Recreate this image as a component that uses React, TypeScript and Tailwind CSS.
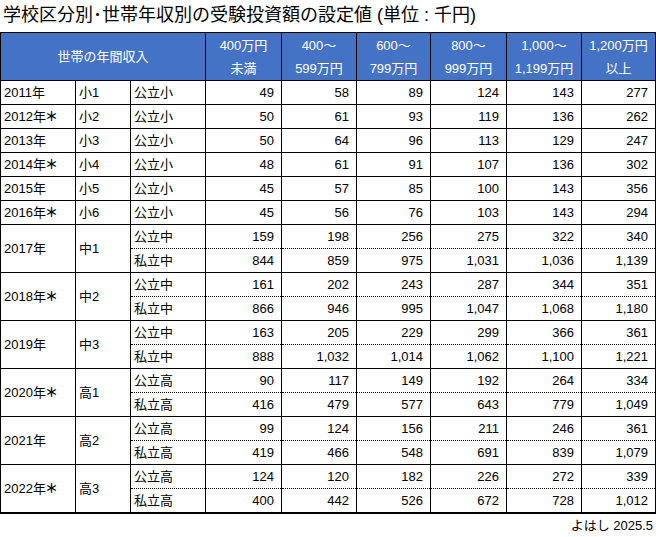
const heads = [
  ["400万円", "未満"],
  ["400～", "599万円"],
  ["600～", "799万円"],
  ["800～", "999万円"],
  ["1,000～", "1,199万円"],
  ["1,200万円", "以上"],
];

type Group = { year: string; star?: boolean; grade: string; rows: [string, string[]][] };

const groups: Group[] = [
  { year: "2011年", grade: "小1", rows: [["公立小", ["49", "58", "89", "124", "143", "277"]]] },
  { year: "2012年", star: true, grade: "小2", rows: [["公立小", ["50", "61", "93", "119", "136", "262"]]] },
  { year: "2013年", grade: "小3", rows: [["公立小", ["50", "64", "96", "113", "129", "247"]]] },
  { year: "2014年", star: true, grade: "小4", rows: [["公立小", ["48", "61", "91", "107", "136", "302"]]] },
  { year: "2015年", grade: "小5", rows: [["公立小", ["45", "57", "85", "100", "143", "356"]]] },
  { year: "2016年", star: true, grade: "小6", rows: [["公立小", ["45", "56", "76", "103", "143", "294"]]] },
  {
    year: "2017年",
    grade: "中1",
    rows: [
      ["公立中", ["159", "198", "256", "275", "322", "340"]],
      ["私立中", ["844", "859", "975", "1,031", "1,036", "1,139"]],
    ],
  },
  {
    year: "2018年",
    star: true,
    grade: "中2",
    rows: [
      ["公立中", ["161", "202", "243", "287", "344", "351"]],
      ["私立中", ["866", "946", "995", "1,047", "1,068", "1,180"]],
    ],
  },
  {
    year: "2019年",
    grade: "中3",
    rows: [
      ["公立中", ["163", "205", "229", "299", "366", "361"]],
      ["私立中", ["888", "1,032", "1,014", "1,062", "1,100", "1,221"]],
    ],
  },
  {
    year: "2020年",
    star: true,
    grade: "高1",
    rows: [
      ["公立高", ["90", "117", "149", "192", "264", "334"]],
      ["私立高", ["416", "479", "577", "643", "779", "1,049"]],
    ],
  },
  {
    year: "2021年",
    grade: "高2",
    rows: [
      ["公立高", ["99", "124", "156", "211", "246", "361"]],
      ["私立高", ["419", "466", "548", "691", "839", "1,079"]],
    ],
  },
  {
    year: "2022年",
    star: true,
    grade: "高3",
    rows: [
      ["公立高", ["124", "120", "182", "226", "272", "339"]],
      ["私立高", ["400", "442", "526", "672", "728", "1,012"]],
    ],
  },
];

const widths = ["w-[75px]", "w-[55px]", "w-[75px]", "w-[76px]", "w-[75px]", "w-[74px]", "w-[76px]", "w-[75px]", "w-[74px]"];

export default function App() {
  return (
    <div className="w-[656px] h-[537px] bg-white text-black font-['Liberation_Sans','Noto_Sans_CJK_JP',sans-serif]">
      <h1 className="h-[32px] pl-[3px] pt-[3px] text-[18px] leading-[24px] font-normal">
        学校区分別･世帯年収別の受験投資額の設定値 (単位 : 千円)
      </h1>
      <table className="table-fixed border-collapse w-[655px] text-[13px]">
        <colgroup>
          {widths.map((w, i) => (
            <col key={i} className={w} />
          ))}
        </colgroup>
        <thead>
          <tr className="h-[48px] bg-[#4472c4] text-white">
            <th colSpan={3} className="border border-black font-normal">
              世帯の年間収入
            </th>
            {heads.map(([a, b]) => (
              <th key={a + b} className="border border-black font-normal leading-[23px]">
                <div>{a}</div>
                <div>{b}</div>
              </th>
            ))}
          </tr>
        </thead>
        <tbody className="border-b-2 border-black">
          {groups.map((g) =>
            g.rows.map(([kind, nums], ri) => {
              // the split between 公立 and 私立 rows is dotted on both sides of the collapsed border
              const split =
                g.rows.length === 2
                  ? ri === 0
                    ? "[border-bottom-style:dotted]"
                    : "[border-top-style:dotted]"
                  : "";
              return (
                <tr key={g.year + kind} className="h-[24px]">
                  {ri === 0 && (
                    <>
                      <td rowSpan={g.rows.length} className="border border-black pl-[3px]">
                        {g.year}
                        {g.star && <span className="font-['Noto_Sans_CJK_JP'] font-bold -ml-[1px]">＊</span>}
                      </td>
                      <td rowSpan={g.rows.length} className="border border-black pl-[3px]">
                        {g.grade}
                      </td>
                    </>
                  )}
                  <td className={`border border-black pl-[3px] ${split}`}>{kind}</td>
                  {nums.map((n, ni) => (
                    <td key={ni} className={`border border-black text-right pr-[7px] ${split}`}>
                      {n}
                    </td>
                  ))}
                </tr>
              );
            })
          )}
        </tbody>
      </table>
      <div className="pr-[3px] pt-[2px] text-right text-[13px]">よはし 2025.5</div>
    </div>
  );
}
